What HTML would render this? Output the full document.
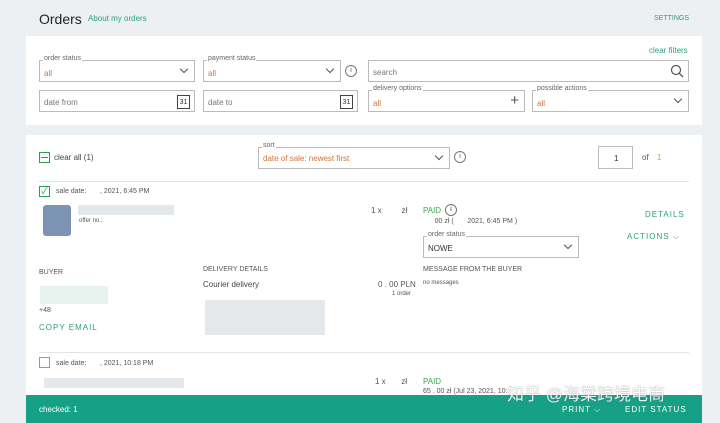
<!DOCTYPE html><html><head><meta charset="utf-8"><style>
body{margin:0;width:720px;height:423px;background:#edf0f2;font-family:"Liberation Sans","Noto Sans CJK SC",sans-serif;position:relative;overflow:hidden;color:#333}
.a{position:absolute}
.p{position:absolute;background:#fff}
.f{position:absolute;border:1px solid #bbb;background:#fff;box-sizing:border-box;font-size:8px}
.lb{position:absolute;top:-6px;left:3px;background:#fff;color:#666;font-size:7px;padding:0 1px}
.v{position:absolute;left:4px;top:8px;color:#d0743c;font-size:8px}
.ph{position:absolute;left:4px;top:7px;color:#777}
.ch{position:absolute;right:7px;top:5px;width:5px;height:5px;border-right:1.2px solid #555;border-bottom:1.2px solid #555;transform:rotate(45deg)}
.s{font-size:7px;color:#555}
.g{color:#2a9d82}
.blur{position:absolute;background:#e4e8ea}
</style></head><body>
<div class="a" style="left:39px;top:11px;font-size:14px;color:#222">Orders</div>
<div class="a g" style="left:88px;top:14px;font-size:8px">About my orders</div>
<div class="a g" style="left:654px;top:15px;font-size:7px">SETTINGS</div>
<div class="p" style="left:26px;top:36px;width:676px;height:89px"></div>
<div class="a g" style="left:649px;top:46px;font-size:8px">clear filters</div>
<div class="f" style="left:39px;top:60px;width:156px;height:22px"><span class="lb">order status</span><span class="v">all</span><span class="ch"></span></div>
<div class="f" style="left:203px;top:60px;width:138px;height:22px"><span class="lb">payment status</span><span class="v">all</span><span class="ch"></span></div>
<div class="a" style="left:345px;top:65px;width:10px;height:10px;border:1px solid #777;border-radius:50%;font-size:7px;text-align:center;line-height:10px;color:#555">i</div>
<div class="f" style="left:368px;top:60px;width:321px;height:22px"><span class="ph">search</span>
<svg class="a" style="right:4px;top:3px" width="14" height="14"><circle cx="6" cy="6" r="4.5" fill="none" stroke="#555" stroke-width="1.2"/><line x1="9.3" y1="9.3" x2="13" y2="13" stroke="#555" stroke-width="1.3"/></svg></div>
<div class="f" style="left:39px;top:90px;width:156px;height:22px"><span class="ph">date from</span><div class="a" style="right:4px;top:4px;width:11px;height:12px;border:1px solid #444;font-size:7px;text-align:center;line-height:13px">31</div></div>
<div class="f" style="left:203px;top:90px;width:155px;height:22px"><span class="ph">date to</span><div class="a" style="right:4px;top:4px;width:11px;height:12px;border:1px solid #444;font-size:7px;text-align:center;line-height:13px">31</div></div>
<div class="f" style="left:368px;top:90px;width:157px;height:22px"><span class="lb">delivery options</span><span class="v">all</span><span class="a" style="right:5px;top:1px;font-size:15px;color:#555">+</span></div>
<div class="f" style="left:532px;top:90px;width:157px;height:22px"><span class="lb">possible actions</span><span class="v">all</span><span class="ch"></span></div>

<div class="p" style="left:26px;top:135px;width:676px;height:260px"></div>
<div class="a" style="left:39px;top:152px;width:9px;height:9px;border:1px solid #2a9d58"><div style="margin:4px 1px;height:1px;background:#2a9d58"></div></div>
<div class="a" style="left:54px;top:153px;font-size:8px;color:#444">clear all (1)</div>
<div class="f" style="left:258px;top:147px;width:192px;height:22px"><span class="lb">sort</span><span class="v" style="top:6px">date of sale: newest first</span><span class="ch"></span></div>
<div class="a" style="left:454px;top:151px;width:10px;height:10px;border:1px solid #777;border-radius:50%;font-size:7px;text-align:center;line-height:10px;color:#555">i</div>
<div class="f" style="left:598px;top:146px;width:35px;height:23px"><span class="a" style="left:15px;top:7px">1</span></div>
<div class="a" style="left:642px;top:153px;font-size:8px;color:#555">of <span style="color:#d0a040;margin-left:6px">1</span></div>
<div class="a" style="left:39px;top:181px;width:650px;height:1px;background:#e3e3e3"></div>
<div class="a" style="left:39px;top:186px;width:9px;height:9px;border:1px solid #2a9d58;font-size:9px;line-height:9px;color:#2a9d58;text-align:center">✓</div>
<div class="a s" style="left:56px;top:188px">sale date: &nbsp; &nbsp; &nbsp; , 2021, 6:45 PM</div>
<div class="a" style="left:43px;top:205px;width:28px;height:31px;background:#7d93b3;border-radius:3px"></div>
<div class="blur" style="left:78px;top:205px;width:96px;height:10px"></div>
<div class="a s" style="left:79px;top:218px;font-size:6px">offer no.:</div>
<div class="a s" style="left:371px;top:206px;font-size:8px">1 x &nbsp; &nbsp; &nbsp; &nbsp; zł</div>
<div class="a" style="left:423px;top:206px;font-size:8px;color:#3aa84a">PAID</div>
<div class="a" style="left:445px;top:204px;width:10px;height:10px;border:1px solid #777;border-radius:50%;font-size:7px;text-align:center;line-height:10px">i</div>
<div class="a s" style="left:423px;top:218px">&nbsp; &nbsp; &nbsp; 00 zł ( &nbsp; &nbsp; &nbsp; 2021, 6:45 PM )</div>
<div class="f" style="left:423px;top:236px;width:156px;height:22px"><span class="lb">order status</span><span class="a" style="left:4px;top:7px;font-size:8px">NOWE</span><span class="ch"></span></div>
<div class="a g" style="left:645px;top:210px;font-size:8px;letter-spacing:1px">DETAILS</div>
<div class="a g" style="left:627px;top:232px;font-size:8px;letter-spacing:1px">ACTIONS ⌵</div>
<div class="a s" style="left:39px;top:269px">BUYER</div>
<div class="a s" style="left:203px;top:266px">DELIVERY DETAILS</div>
<div class="a s" style="left:423px;top:266px">MESSAGE FROM THE BUYER</div>
<div class="blur" style="left:40px;top:286px;width:68px;height:18px;background:#e8f2ee"></div>
<div class="a s" style="left:39px;top:307px">+48</div>
<div class="a g" style="left:39px;top:323px;font-size:8px;letter-spacing:1px">COPY EMAIL</div>
<div class="a" style="left:203px;top:280px;font-size:8px;color:#444">Courier delivery</div>
<div class="a" style="left:378px;top:280px;font-size:8px;color:#555">0 . 00 PLN</div>
<div class="a s" style="left:392px;top:291px;font-size:6px">1 order</div>
<div class="a s" style="left:423px;top:280px;font-size:6px">no messages</div>
<div class="blur" style="left:205px;top:300px;width:120px;height:35px"></div>
<div class="a" style="left:39px;top:352px;width:650px;height:1px;background:#e3e3e3"></div>
<div class="a" style="left:39px;top:357px;width:9px;height:9px;border:1px solid #999"></div>
<div class="a s" style="left:56px;top:360px">sale date: &nbsp; &nbsp; &nbsp; , 2021, 10:18 PM</div>
<div class="blur" style="left:44px;top:378px;width:140px;height:10px"></div>
<div class="a s" style="left:375px;top:377px;font-size:8px">1 x &nbsp; &nbsp; &nbsp; zł</div>
<div class="a" style="left:423px;top:377px;font-size:8px;color:#3aa84a">PAID</div>
<div class="a s" style="left:423px;top:388px">65 . 00 zł (Jul 23, 2021, 10:</div>
<div class="a" style="left:26px;top:395px;width:676px;height:28px;background:#16a085"></div>
<div class="a" style="left:39px;top:405px;font-size:8px;color:#fff">checked: 1</div>
<div class="a" style="left:562px;top:405px;font-size:8px;color:#fff;letter-spacing:1px">PRINT ⌵</div>
<div class="a" style="left:625px;top:405px;font-size:8px;color:#fff;letter-spacing:1px">EDIT STATUS</div>
<div class="a" style="left:507px;top:380px;font-size:17px;color:#fff;opacity:.9;text-shadow:0 0 1px #555">知乎 @海棠跨境电商</div>
</body></html>
